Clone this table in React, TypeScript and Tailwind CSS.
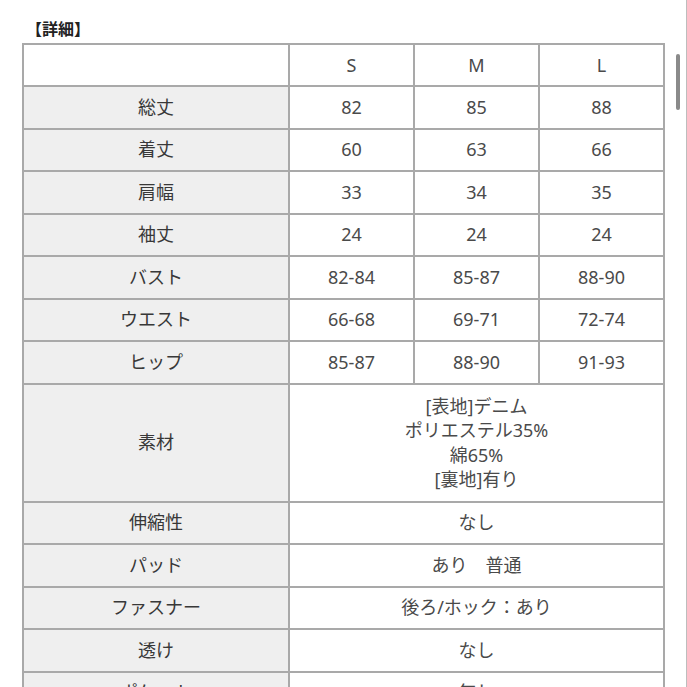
import React from "react";

const rows: [string, string, string, string][] = [
  ["総丈", "82", "85", "88"],
  ["着丈", "60", "63", "66"],
  ["肩幅", "33", "34", "35"],
  ["袖丈", "24", "24", "24"],
  ["バスト", "82-84", "85-87", "88-90"],
  ["ウエスト", "66-68", "69-71", "72-74"],
  ["ヒップ", "85-87", "88-90", "91-93"],
];

const wide: [string, string][] = [
  ["伸縮性", "なし"],
  ["パッド", "あり　普通"],
  ["ファスナー", "後ろ/ホック：あり"],
  ["透け", "なし"],
  ["ポケット", "無し"],
];

const cell = "border-2 border-[#a9a9a9] text-center align-middle p-0";
const label = `${cell} bg-[#efefef] text-[#383838]`;

export default function App() {
  return (
    <div
      className="relative w-[687px] h-[687px] overflow-hidden bg-white text-[#4a4a4a]"
      style={{ fontFamily: '"Noto Sans", "Noto Sans CJK JP", sans-serif' }}
    >
      <div className="pl-[26px] pt-[16px] text-[16px] font-bold leading-[27px] text-[#222]">【詳細】</div>
      <table className="ml-[22px] table-fixed border-collapse w-[641px] text-[18px]">
        <colgroup>
          <col className="w-[266px]" />
          <col className="w-[125px]" />
          <col className="w-[125px]" />
          <col className="w-[125px]" />
        </colgroup>
        <tbody>
          <tr className="h-[42px]">
            <td className={`${cell} bg-white`}></td>
            <td className={cell}>S</td>
            <td className={cell}>M</td>
            <td className={cell}>L</td>
          </tr>
          {rows.map((r) => (
            <tr key={r[0]} className="h-[42.5px]">
              <td className={label}>{r[0]}</td>
              <td className={cell}>{r[1]}</td>
              <td className={cell}>{r[2]}</td>
              <td className={cell}>{r[3]}</td>
            </tr>
          ))}
          <tr className="h-[118px]">
            <td className={label}>素材</td>
            <td colSpan={3} className={`${cell} leading-[24.5px]`}>
              <div>[表地]デニム</div>
              <div>ポリエステル35%</div>
              <div>綿65%</div>
              <div>[裏地]有り</div>
            </td>
          </tr>
          {wide.map((r) => (
            <tr key={r[0]} className="h-[42.5px]">
              <td className={label}>{r[0]}</td>
              <td colSpan={3} className={cell}>{r[1]}</td>
            </tr>
          ))}
        </tbody>
      </table>
      <div className="absolute left-[676px] top-[54px] w-[4px] h-[56px] rounded-full bg-[#8a8a8a]" />
      <div className="absolute right-0 top-0 w-px h-full bg-[#bdbdbd]" />
    </div>
  );
}
